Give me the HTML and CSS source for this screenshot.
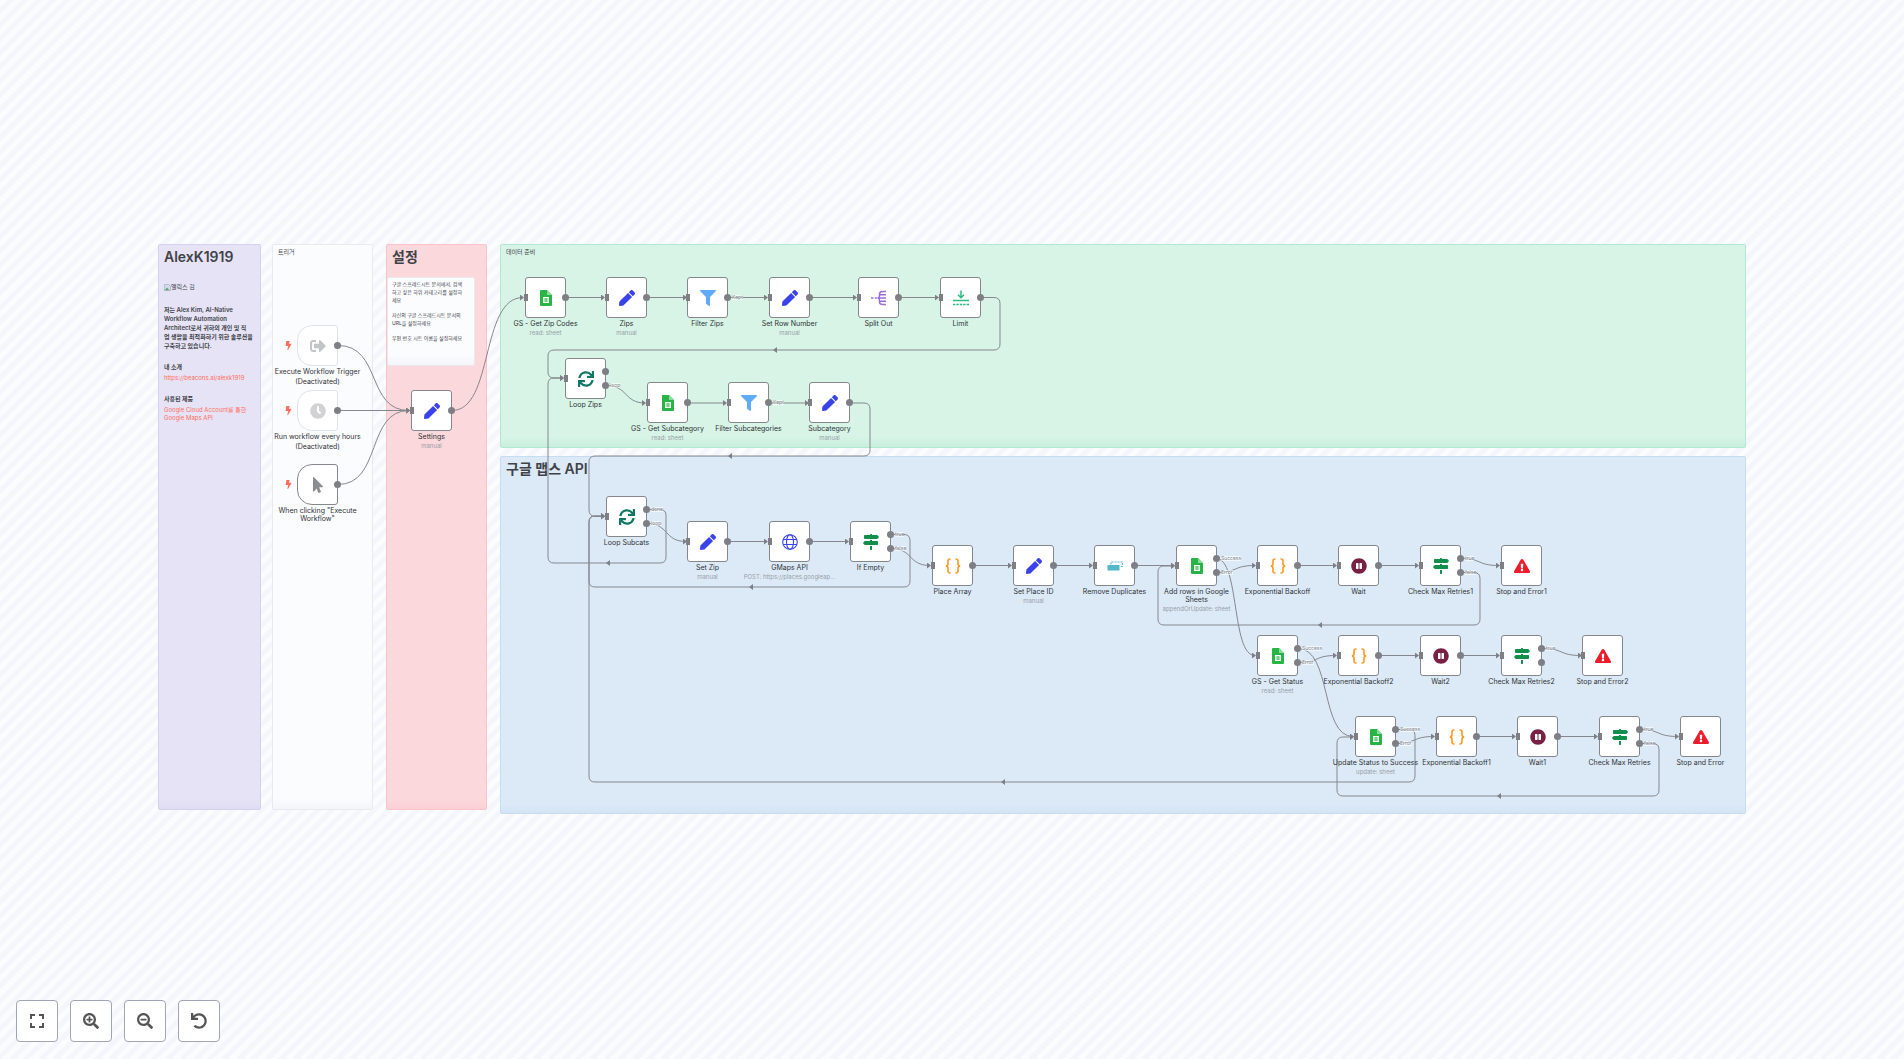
FILE: index.html
```html
<!DOCTYPE html>
<html lang="ko">
<head>
<meta charset="utf-8">
<title>AlexK1919 워크플로</title>
<link rel="stylesheet" href="styles.css">
</head>
<body>
<svg class="sprite" aria-hidden="true">
  <symbol id="pen" viewBox="0 0 512 512"><path fill="#3a42e9" d="M290.74 93.24l128.02 128.02-277.99 277.99-114.14 12.6C11.35 513.54-1.56 500.62.14 485.34l12.7-114.22 277.9-277.88zm207.2-19.06l-60.11-60.11c-18.75-18.75-49.16-18.75-67.91 0l-56.55 56.55 128.02 128.02 56.55-56.55c18.75-18.76 18.75-49.16 0-67.91z"/></symbol>
  <symbol id="filter" viewBox="0 0 512 512"><path fill="#5fabfa" d="M487.976 0H24.028C2.71 0-8.047 25.866 7.058 40.971L192 225.941V432c0 7.831 3.821 15.17 10.237 19.662l80 55.98C298.02 518.69 320 507.493 320 487.98V225.941l184.947-184.97C520.021 25.896 509.338 0 487.976 0z"/></symbol>
  <symbol id="clock" viewBox="0 0 512 512"><path fill="#d2d2d4" d="M256,8C119,8,8,119,8,256S119,504,256,504,504,393,504,256,393,8,256,8Zm92.49,313h0l-20,25a16,16,0,0,1-22.49,2.5h0l-67-49.72a40,40,0,0,1-15-31.23V112a16,16,0,0,1,16-16h32a16,16,0,0,1,16,16V256l58,42.5A16,16,0,0,1,348.49,321Z"/></symbol>
  <symbol id="exit" viewBox="0 0 512 512"><path fill="#c3c4c7" d="M497 273L329 441c-15 15-41 4.500-41-17v-96H152c-13.300 0-24-10.700-24-24v-96c0-13.300 10.700-24 24-24h136V88c0-21.400 25.900-32 41-17l168 168c9.300 9.400 9.300 24.600 0 34zM192 436v-40c0-6.600-5.400-12-12-12H96c-17.700 0-32-14.300-32-32V160c0-17.700 14.300-32 32-32h84c6.600 0 12-5.400 12-12V76c0-6.600-5.400-12-12-12H96c-53 0-96 43-96 96v192c0 53 43 96 96 96h84c6.600 0 12-5.400 12-12z"/></symbol>
  <symbol id="pointer" viewBox="0 0 320 512"><path fill="#8b8c91" d="M302.189 329.126H196.105l55.831 135.993c3.889 9.428-.555 19.999-9.444 23.999l-49.165 21.427c-9.165 4-19.443-.571-23.332-9.714l-53.053-129.136-86.664 89.138C18.729 472.71 0 463.554 0 447.977V18.299C0 1.899 19.921-6.096 30.277 5.443l284.412 292.542c11.472 11.179 3.007 31.141-12.5 31.141z"/></symbol>
  <symbol id="sync" viewBox="0 0 512 512"><path fill="#117864" d="M440.65 12.57l4 82.77A247.16 247.16 0 0 0 255.83 8C134.73 8 33.91 94.92 12.29 209.82A12 12 0 0 0 24.09 224h49.05a12 12 0 0 0 11.67-9.26 175.91 175.91 0 0 1 317-56.94l-101.46-4.86a12 12 0 0 0-12.57 12v47.41a12 12 0 0 0 12 12H500a12 12 0 0 0 12-12V12a12 12 0 0 0-12-12h-47.37a12 12 0 0 0-11.98 12.57zM255.83 432a175.61 175.61 0 0 1-146-77.8l101.8 4.87a12 12 0 0 0 12.57-12v-47.4a12 12 0 0 0-12-12H12a12 12 0 0 0-12 12V500a12 12 0 0 0 12 12h47.35a12 12 0 0 0 12-12.6l-4.15-82.57A247.17 247.17 0 0 0 255.83 504c121.11 0 221.93-86.92 243.55-201.82a12 12 0 0 0-11.8-14.18h-49.05a12 12 0 0 0-11.67 9.26A175.86 175.86 0 0 1 255.83 432z"/></symbol>
  <symbol id="warn" viewBox="0 0 576 512"><path fill="#ec1c2b" d="M569.517 440.013C587.975 472.007 564.806 512 527.94 512H48.054c-36.937 0-59.999-40.055-41.577-71.987L246.423 23.985c18.467-32.009 64.72-31.951 83.154 0l239.94 416.028zM288 354c-25.405 0-46 20.595-46 46s20.595 46 46 46 46-20.595 46-46-20.595-46-46-46zm-43.673-165.346l7.418 136c.347 6.364 5.609 11.346 11.982 11.346h48.546c6.373 0 11.635-4.982 11.982-11.346l7.418-136c.375-6.874-5.098-12.654-11.982-12.654h-63.383c-6.884 0-12.356 5.78-11.981 12.654z"/></symbol>
  <symbol id="pause" viewBox="0 0 512 512"><path fill="#772244" d="M256 8C119 8 8 119 8 256s111 248 248 248 248-111 248-248S393 8 256 8zm-16 328c0 8.800-7.200 16-16 16h-48c-8.800 0-16-7.200-16-16V176c0-8.800 7.200-16 16-16h48c8.800 0 16 7.200 16 16v160zm112 0c0 8.800-7.200 16-16 16h-48c-8.800 0-16-7.200-16-16V176c0-8.800 7.200-16 16-16h48c8.800 0 16 7.200 16 16v160z"/></symbol>
  <symbol id="signs" viewBox="0 0 512 512"><path fill="#118f4b" d="M507.31 84.69L464 41.37c-6-6-14.14-9.37-22.63-9.37H288V16c0-8.84-7.16-16-16-16h-32c-8.840 0-16 7.160-16 16v16H56c-13.250 0-24 10.750-24 24v80c0 13.250 10.750 24 24 24h385.370c8.490 0 16.620-3.370 22.630-9.370l43.310-43.310c6.250-6.260 6.250-16.380 0-22.630zM224 496c0 8.840 7.160 16 16 16h32c8.840 0 16-7.160 16-16V384h-64v112zm232-272H288v-32h-64v32H70.630c-8.490 0-16.620 3.370-22.630 9.370L4.690 276.690c-6.250 6.250-6.250 16.380 0 22.630L48 342.630c6 6 14.140 9.370 22.630 9.370H456c13.250 0 24-10.750 24-24v-80c0-13.250-10.750-24-24-24z"/></symbol>
  <symbol id="bolt" viewBox="0 0 320 512"><path fill="#ff6d5a" d="M296 160H180.6l42.6-129.8C227.2 15 215.7 0 200 0H56C44 0 33.8 8.9 32.2 20.8l-32 240C-1.7 275.2 9.5 288 24 288h118.7L96.6 482.5c-3.6 15.2 8 29.5 23.3 29.5 8.4 0 16.4-4.4 20.8-12l176-304c9.3-15.9-2.2-36-20.700-36z"/></symbol>
  <symbol id="sheets" viewBox="0 0 16 16"><path fill="#29b446" d="M3 0h6l5 5v10a1 1 0 0 1-1 1H3a1 1 0 0 1-1-1V1a1 1 0 0 1 1-1z"/><path fill="#8ed99c" d="M9 0l5 5H9z"/><path fill="#fff" d="M5 7h6v6H5z"/><path stroke="#29b446" stroke-width=".8" d="M5.700 9h4.600M5.700 11h4.600M8 8v4.300"/></symbol>
  <symbol id="globe" viewBox="0 0 16 16"><g fill="none" stroke="#3a42e9" stroke-width="1.100"><circle cx="8" cy="8" r="7.300"/><ellipse cx="8" cy="8" rx="3.500" ry="7.300"/><path d="M1.300 5.500h13.400M1.300 10.500h13.400"/></g></symbol>
  <symbol id="braces" viewBox="0 0 16 16"><g fill="none" stroke="#ff9922" stroke-width="1.600"><path d="M5.500 1H5Q3 1 3 3v2.500Q3 8 .800 8 3 8 3 10.500V13q0 2 2 2h.500"/><path d="M10.500 1h.500q2 0 2 2v2.500Q13 8 15.200 8 13 8 13 10.500V13q0 2-2 2h-.500"/></g></symbol>
  <symbol id="dedupe" viewBox="0 0 16 16"><path fill="#54b8c9" d="M1 7h11.500v5.500h-12V7.500z"/><path fill="none" stroke="#54b8c9" stroke-width="1.100" stroke-dasharray="2 1" d="M4 6.500v-2.500h11.400v4.500h-2.400"/></symbol>
  <symbol id="split" viewBox="0 0 16 16"><g fill="none" stroke="#9b6dd7" stroke-width="1.400"><path d="M0 8h2.500M3.800 8h2"/><path d="M15 1.500h-3Q8.500 1.500 8.500 4v1.500Q8.500 8 6.500 8q2 0 2 2.500V12q0 2.500 3.500 2.500h3M9 4.800h6M8.300 8H15M9 11.200h6"/></g></symbol>
  <symbol id="limit" viewBox="0 0 16 16"><g fill="none" stroke="#2dbb7f" stroke-width="1.500"><path d="M8 .500v7M5 4.800l3 3 3-3M0 10.500h16"/><path stroke-dasharray="2.400 1" d="M0 14.500h16"/></g></symbol>
  <symbol id="expand" viewBox="0 0 14 14"><path fill="none" stroke="#555" stroke-width="2" d="M1 5V1h4M9 1h4v4M13 9v4H9M5 13H1V9"/></symbol>
  <symbol id="zoom-in" viewBox="0 0 512 512"><path fill="#555" d="M304 192v32c0 6.600-5.400 12-12 12h-56v56c0 6.600-5.400 12-12 12h-32c-6.600 0-12-5.400-12-12v-56h-56c-6.600 0-12-5.400-12-12v-32c0-6.600 5.400-12 12-12h56v-56c0-6.600 5.400-12 12-12h32c6.600 0 12 5.400 12 12v56h56c6.600 0 12 5.400 12 12zm201 284.700L476.700 505c-9.400 9.400-24.600 9.400-33.900 0L343 405.300c-4.500-4.500-7-10.600-7-17V372c-35.300 27.600-79.700 44-128 44C93.100 416 0 322.900 0 208S93.100 0 208 0s208 93.100 208 208c0 48.300-16.400 92.700-44 128h16.300c6.400 0 12.500 2.500 17 7l99.700 99.700c9.300 9.400 9.300 24.600 0 34zM344 208c0-75.200-60.800-136-136-136S72 132.800 72 208s60.800 136 136 136 136-60.800 136-136z"/></symbol>
  <symbol id="zoom-out" viewBox="0 0 512 512"><path fill="#555" d="M304 192v32c0 6.600-5.400 12-12 12H124c-6.600 0-12-5.400-12-12v-32c0-6.600 5.400-12 12-12h168c6.600 0 12 5.400 12 12zm201 284.700L476.700 505c-9.400 9.400-24.600 9.400-33.900 0L343 405.300c-4.500-4.500-7-10.600-7-17V372c-35.300 27.600-79.700 44-128 44C93.100 416 0 322.900 0 208S93.100 0 208 0s208 93.100 208 208c0 48.300-16.400 92.700-44 128h16.300c6.400 0 12.500 2.500 17 7l99.700 99.700c9.300 9.400 9.300 24.600 0 34zM344 208c0-75.200-60.800-136-136-136S72 132.800 72 208s60.800 136 136 136 136-60.800 136-136z"/></symbol>
  <symbol id="undo" viewBox="0 0 512 512"><path fill="#555" d="M212.333 224.333H12c-6.627 0-12-5.373-12-12V12C0 5.373 5.373 0 12 0h48c6.627 0 12 5.373 12 12v78.112C117.773 39.279 184.26 7.47 258.175 8.007c136.906.994 246.448 111.623 246.157 248.532C504.041 393.258 393.12 504 256.333 504c-64.089 0-122.496-24.313-166.51-64.215-5.099-4.622-5.334-12.554-.467-17.42l33.967-33.967c4.474-4.474 11.662-4.717 16.401-.525C170.76 415.336 211.58 432 256.333 432c97.268 0 176-78.716 176-176 0-97.267-78.716-176-176-176-58.496 0-110.28 28.476-142.274 72.333h98.274c6.627 0 12 5.373 12 12v48c0 6.627-5.373 12-12 12z"/></symbol>
</svg>

<main class="canvas">
  <section class="sticky purple" style="left:158px;top:244px;width:103px;height:566px">
    <h1>AlexK1919</h1>
    <p class="photo"><svg viewBox="0 0 8 8" aria-hidden="true"><path fill="#cfdcef" stroke="#9aa3b3" stroke-width=".7" d="M.5.500h5l2 2v5h-7z"/><path fill="#58a55c" d="M1 7l2.500-3L6 7z"/></svg>앨릭스 김</p>
    <h2>저는 Alex Kim, AI-Native<br>Workflow Automation<br>Architect로서 귀하의 개인 및 직<br>업 생활을 최적화하기 위한 솔루션을<br>구축하고 있습니다.</h2>
    <h3>내 소개</h3>
    <p><a href="https://beacons.ai/alexk1919">https://beacons.ai/alexk1919</a></p>
    <h3>사용된 제품</h3>
    <p><a href="#maps">Google Cloud Account를 통한<br>Google Maps API</a></p>
  </section>
  <section class="sticky white" style="left:272px;top:244px;width:101px;height:566px"><p>트리거</p></section>
  <section class="sticky red" style="left:386px;top:244px;width:101px;height:566px"><h1>설정</h1></section>
  <section class="sticky white note" style="left:387px;top:277px;width:88px;height:89px">
    <p>구글 스프레드시트 문서에서, 검색<br>하고 싶은 하위 카테고리를 설정하<br>세요</p>
    <p>자신의 구글 스프레드시트 문서의<br>URL을 설정하세요</p>
    <p>우편 번호 시트 이름을 설정하세요</p>
  </section>
  <section class="sticky green" style="left:500px;top:244px;width:1246px;height:204px"><p>데이터 준비</p></section>
  <section class="sticky blue" style="left:500px;top:456px;width:1246px;height:358px"><h1>구글 맵스 API</h1></section>

  <svg class="wires" aria-hidden="true">
    <defs><marker id="tip" viewBox="0 0 4 6" refX="3" refY="3" markerWidth="4" markerHeight="6" markerUnits="userSpaceOnUse" orient="auto"><path d="M0 0L4 3 0 6z"/></marker></defs>
    <g class="flow">
      <path d="M338 345.500C382 345.500 366 410.500 409 410.500"/>
      <path d="M338 410.500H409"/>
      <path d="M338 484.500C382 484.500 366 410.500 409 410.500"/>
      <path d="M452 410.500C494 410.500 480 297.500 523 297.500"/>
      <path d="M566 297.500H604"/><path d="M647 297.500H686"/><path d="M729 297.500H767"/><path d="M810 297.500H856"/><path d="M899 297.500H938"/>
      <path d="M981 297.500H994q6 0 6 6V344q0 6-6 6H554q-6 0-6 6V372q0 6 6 6H563"/>
      <path d="M606 385.500C628 385.500 624 403 645 403"/>
      <path d="M688 403H726"/><path d="M769 403H808"/>
      <path d="M850 403H864q6 0 6 6V450q0 6-6 6H595q-6 0-6 6V510q0 6 6 6.500H604"/>
      <path d="M647 509.500H660q6 0 6 6V557q0 6-6 6H554q-6 0-6-6V384q0-6 6-6H563"/>
      <path d="M647 523.500C669 523.500 664 541.500 686 541.500"/>
      <path d="M729 541.500H767"/><path d="M810 541.500H848"/>
      <path d="M891 534.500H904q6 0 6 6V581q0 6-6 6H595q-6 0-6-6V522q0-6 6-6H604"/>
      <path d="M891 548.500C913 548.500 908 565.500 930 565.500"/>
      <path d="M973 565.500H1011"/><path d="M1054 565.500H1092"/><path d="M1135 565.500H1174"/>
      <path d="M1216 558.500C1240 558.500 1231 655.500 1255 655.500"/>
      <path d="M1216 572.500C1238 572.500 1233 565.500 1255 565.500"/>
      <path d="M1298 565.500H1336"/><path d="M1379 565.500H1418"/>
      <path d="M1461 558.500C1482 558.500 1477 565.500 1499 565.500"/>
      <path d="M1461 572.500H1474q6 0 6 6V619q0 6-6 6H1164q-6 0-6-6V572q0-6 6-6H1174"/>
      <path d="M1298 648.500C1332 648.500 1320 736.500 1353 736.500"/>
      <path d="M1298 662.500C1320 662.500 1314 655.500 1336 655.500"/>
      <path d="M1379 655.500H1418"/><path d="M1461 655.500H1499"/>
      <path d="M1542 648.500C1564 648.500 1559 655.500 1581 655.500"/>
      <path d="M1395 729.500H1409q6 0 6 6V776q0 6-6 6H595q-6 0-6-6V522q0-6 6-6H604"/>
      <path d="M1395 743.500C1417 743.500 1412 736.500 1434 736.500"/>
      <path d="M1476 736.500H1515"/><path d="M1558 736.500H1597"/>
      <path d="M1639 729.500C1661 729.500 1656 736.500 1678 736.500"/>
      <path d="M1639 743.500H1653q6 0 6 6V790q0 6-6 6H1343q-6 0-6-6V743q0-6 6-6H1353"/>
    </g>
    <path class="mid" d="M773 350l4-3v6zM728 456l4-3v6zM606 563l4-3v6zM749 587l4-3v6zM1001 782l4-3v6zM1318 625l4-3v6zM1497 796l4-3v6z"/>
  </svg>

  <article class="node start off" style="left:297px;top:325px"><div class="box"><svg class="bolt"><use href="#bolt"/></svg><svg class="icon"><use href="#exit"/></svg><i class="out"></i></div><h4>Execute Workflow Trigger</h4><h4 class="state">(Deactivated)</h4></article>
  <article class="node start off" style="left:297px;top:390px"><div class="box"><svg class="bolt"><use href="#bolt"/></svg><svg class="icon"><use href="#clock"/></svg><i class="out"></i></div><h4>Run workflow every hours</h4><h4 class="state">(Deactivated)</h4></article>
  <article class="node start" style="left:297px;top:464px"><div class="box"><svg class="bolt"><use href="#bolt"/></svg><svg class="icon"><use href="#pointer"/></svg><i class="out"></i></div><h4>When clicking "Execute<br>Workflow"</h4></article>
  <article class="node" style="left:411px;top:390px"><div class="box"><i class="in"></i><svg class="icon"><use href="#pen"/></svg><i class="out"></i></div><h4>Settings</h4><p>manual</p></article>

  <article class="node" style="left:525px;top:277px"><div class="box"><i class="in"></i><svg class="icon"><use href="#sheets"/></svg><i class="out"></i></div><h4>GS - Get Zip Codes</h4><p>read: sheet</p></article>
  <article class="node" style="left:606px;top:277px"><div class="box"><i class="in"></i><svg class="icon"><use href="#pen"/></svg><i class="out"></i></div><h4>Zips</h4><p>manual</p></article>
  <article class="node" style="left:687px;top:277px"><div class="box"><i class="in"></i><svg class="icon"><use href="#filter"/></svg><i class="out"></i><span class="tag">Kept</span></div><h4>Filter Zips</h4></article>
  <article class="node" style="left:769px;top:277px"><div class="box"><i class="in"></i><svg class="icon"><use href="#pen"/></svg><i class="out"></i></div><h4>Set Row Number</h4><p>manual</p></article>
  <article class="node" style="left:858px;top:277px"><div class="box"><i class="in"></i><svg class="icon"><use href="#split"/></svg><i class="out"></i></div><h4>Split Out</h4></article>
  <article class="node" style="left:940px;top:277px"><div class="box"><i class="in"></i><svg class="icon"><use href="#limit"/></svg><i class="out"></i></div><h4>Limit</h4></article>

  <article class="node" style="left:565px;top:358px"><div class="box"><i class="in"></i><svg class="icon"><use href="#sync"/></svg><i class="out up"></i><i class="out down"></i><span class="tag down">loop</span></div><h4>Loop Zips</h4></article>
  <article class="node" style="left:647px;top:382px"><div class="box"><i class="in"></i><svg class="icon"><use href="#sheets"/></svg><i class="out"></i></div><h4>GS - Get Subcategory</h4><p>read: sheet</p></article>
  <article class="node" style="left:728px;top:382px"><div class="box"><i class="in"></i><svg class="icon"><use href="#filter"/></svg><i class="out"></i><span class="tag">Kept</span></div><h4>Filter Subcategories</h4></article>
  <article class="node" style="left:809px;top:382px"><div class="box"><i class="in"></i><svg class="icon"><use href="#pen"/></svg><i class="out"></i></div><h4>Subcategory</h4><p>manual</p></article>

  <article class="node" style="left:606px;top:496px"><div class="box"><i class="in"></i><svg class="icon"><use href="#sync"/></svg><i class="out up"></i><i class="out down"></i><span class="tag up">done</span><span class="tag down">loop</span></div><h4>Loop Subcats</h4></article>
  <article class="node" style="left:687px;top:521px"><div class="box"><i class="in"></i><svg class="icon"><use href="#pen"/></svg><i class="out"></i></div><h4>Set Zip</h4><p>manual</p></article>
  <article class="node" style="left:769px;top:521px"><div class="box"><i class="in"></i><svg class="icon"><use href="#globe"/></svg><i class="out"></i></div><h4>GMaps API</h4><p>POST: https://places.googleap...</p></article>
  <article class="node" style="left:850px;top:521px"><div class="box"><i class="in"></i><svg class="icon"><use href="#signs"/></svg><i class="out up"></i><i class="out down"></i><span class="tag up">true</span><span class="tag down">false</span></div><h4>If Empty</h4></article>

  <article class="node" style="left:932px;top:545px"><div class="box"><i class="in"></i><svg class="icon"><use href="#braces"/></svg><i class="out"></i></div><h4>Place Array</h4></article>
  <article class="node" style="left:1013px;top:545px"><div class="box"><i class="in"></i><svg class="icon"><use href="#pen"/></svg><i class="out"></i></div><h4>Set Place ID</h4><p>manual</p></article>
  <article class="node" style="left:1094px;top:545px"><div class="box"><i class="in"></i><svg class="icon"><use href="#dedupe"/></svg><i class="out"></i></div><h4>Remove Duplicates</h4></article>
  <article class="node" style="left:1176px;top:545px"><div class="box"><i class="in"></i><svg class="icon"><use href="#sheets"/></svg><i class="out up"></i><i class="out down"></i><span class="tag up">Success</span><span class="tag down">Error</span></div><h4>Add rows in Google<br>Sheets</h4><p>appendOrUpdate: sheet</p></article>
  <article class="node" style="left:1257px;top:545px"><div class="box"><i class="in"></i><svg class="icon"><use href="#braces"/></svg><i class="out"></i></div><h4>Exponential Backoff</h4></article>
  <article class="node" style="left:1338px;top:545px"><div class="box"><i class="in"></i><svg class="icon"><use href="#pause"/></svg><i class="out"></i></div><h4>Wait</h4></article>
  <article class="node" style="left:1420px;top:545px"><div class="box"><i class="in"></i><svg class="icon"><use href="#signs"/></svg><i class="out up"></i><i class="out down"></i><span class="tag up">true</span><span class="tag down">false</span></div><h4>Check Max Retries1</h4></article>
  <article class="node" style="left:1501px;top:545px"><div class="box"><i class="in"></i><svg class="icon"><use href="#warn"/></svg></div><h4>Stop and Error1</h4></article>

  <article class="node" style="left:1257px;top:635px"><div class="box"><i class="in"></i><svg class="icon"><use href="#sheets"/></svg><i class="out up"></i><i class="out down"></i><span class="tag up">Success</span><span class="tag down">Error</span></div><h4>GS - Get Status</h4><p>read: sheet</p></article>
  <article class="node" style="left:1338px;top:635px"><div class="box"><i class="in"></i><svg class="icon"><use href="#braces"/></svg><i class="out"></i></div><h4>Exponential Backoff2</h4></article>
  <article class="node" style="left:1420px;top:635px"><div class="box"><i class="in"></i><svg class="icon"><use href="#pause"/></svg><i class="out"></i></div><h4>Wait2</h4></article>
  <article class="node" style="left:1501px;top:635px"><div class="box"><i class="in"></i><svg class="icon"><use href="#signs"/></svg><i class="out up"></i><i class="out down"></i><span class="tag up">true</span></div><h4>Check Max Retries2</h4></article>
  <article class="node" style="left:1582px;top:635px"><div class="box"><i class="in"></i><svg class="icon"><use href="#warn"/></svg></div><h4>Stop and Error2</h4></article>

  <article class="node" style="left:1355px;top:716px"><div class="box"><i class="in"></i><svg class="icon"><use href="#sheets"/></svg><i class="out up"></i><i class="out down"></i><span class="tag up">Success</span><span class="tag down">Error</span></div><h4>Update Status to Success</h4><p>update: sheet</p></article>
  <article class="node" style="left:1436px;top:716px"><div class="box"><i class="in"></i><svg class="icon"><use href="#braces"/></svg><i class="out"></i></div><h4>Exponential Backoff1</h4></article>
  <article class="node" style="left:1517px;top:716px"><div class="box"><i class="in"></i><svg class="icon"><use href="#pause"/></svg><i class="out"></i></div><h4>Wait1</h4></article>
  <article class="node" style="left:1599px;top:716px"><div class="box"><i class="in"></i><svg class="icon"><use href="#signs"/></svg><i class="out up"></i><i class="out down"></i><span class="tag up">true</span><span class="tag down">false</span></div><h4>Check Max Retries</h4></article>
  <article class="node" style="left:1680px;top:716px"><div class="box"><i class="in"></i><svg class="icon"><use href="#warn"/></svg></div><h4>Stop and Error</h4></article>

  <nav class="controls">
    <button type="button" aria-label="Fit view"><svg class="fit"><use href="#expand"/></svg></button>
    <button type="button" aria-label="Zoom in"><svg><use href="#zoom-in"/></svg></button>
    <button type="button" aria-label="Zoom out"><svg><use href="#zoom-out"/></svg></button>
    <button type="button" aria-label="Reset zoom"><svg><use href="#undo"/></svg></button>
  </nav>
</main>
</body>
</html>
```
FILE: styles.css
```css
* { box-sizing: border-box; }

body {
  margin: 0;
  font-family: Inter, "Noto Sans CJK KR", sans-serif;
  color: #404247;
}

h1, h2, h3, h4, p { margin: 0; }
a { color: #ff6d5a; text-decoration: none; }
.sprite { display: none; }

.canvas {
  position: relative;
  min-height: 100vh;
  overflow: hidden;
  background: repeating-linear-gradient(135deg, #fbfcfe 0 5px, #f4f6fb 5px 10px);
}

/* sticky notes */
.sticky {
  position: absolute;
  padding: 3px 5px;
  border: 1px solid;
  border-radius: 2px;
  font-size: 6px;
  line-height: 8px;
  white-space: nowrap;
}
.sticky::after {
  content: "";
  position: absolute;
  inset: auto 0 0;
  height: 10px;
  background: linear-gradient(transparent, var(--edge));
  opacity: .4;
}
.purple { --edge: #d5d0ef; background: #e6e3f6; border-color: var(--edge); }
.white { --edge: #e8eaf0; background: #fbfcfe; border-color: var(--edge); }
.red { --edge: #fbc2c7; background: #fbd8dc; border-color: var(--edge); }
.green { --edge: #b1e9cf; background: #d7f4e6; border-color: var(--edge); }
.blue { --edge: #c6dcf1; background: #dceaf8; border-color: var(--edge); }

.sticky h1 { font-size: 14px; line-height: 18px; font-weight: 600; }
.sticky h2 { margin-top: 14px; font-size: 6px; line-height: 9px; font-weight: 600; }
.sticky h3 { margin-top: 13px; font-size: 6px; line-height: 8px; font-weight: 600; }
.sticky h3 + p { margin-top: 3px; }
.photo { display: flex; align-items: center; margin-top: 17px; }
.photo svg { width: 7px; height: 7px; }
.note { padding: 2px 4px; font-size: 5px; }
.note p + p { margin-top: 7px; }

/* connections */
.wires { position: absolute; inset: 0; width: 100%; height: 100%; }
.flow path { fill: none; stroke: #85878d; stroke-width: 1; marker-end: url(#tip); }
.wires marker path, .mid { fill: #7d7f85; stroke: none; marker-end: none; }

/* nodes */
.node {
  position: absolute;
  width: 41px;
  display: flex;
  flex-direction: column;
  align-items: center;
  white-space: nowrap;
  text-align: center;
}
.box {
  position: relative;
  width: 41px;
  height: 41px;
  margin-bottom: 2px;
  display: grid;
  place-items: center;
  background: #fff;
  border: 1px solid #85878d;
  border-radius: 3px;
}
.start .box { border-radius: 15px 3px 3px 15px; }
.off .box { border-color: #dfe2ea; }
.icon { width: 16px; height: 16px; }
.bolt { position: absolute; left: -13px; top: 15px; width: 7px; height: 9px; }
.node h4 { font-size: 7px; line-height: 8px; font-weight: 400; color: #303236; }
.node .state { margin-top: 2px; }
.node p { margin-top: 1px; font-size: 6px; line-height: 8px; color: #98a0a6; }

.in, .out { position: absolute; background: #7d7f85; }
.in { left: -2px; top: 16px; width: 4px; height: 7px; }
.out { right: -4px; top: 16px; width: 7px; height: 7px; border-radius: 50%; }
.out.up { top: 9px; }
.out.down { top: 23px; }
.tag {
  position: absolute;
  left: 44px;
  top: 17px;
  font-size: 5px;
  line-height: 5px;
  color: #85888e;
  background: rgba(255, 255, 255, .6);
}
.tag.up { top: 10px; }
.tag.down { top: 24px; }

/* view controls */
.controls {
  position: absolute;
  left: 16px;
  bottom: 17px;
  display: flex;
  gap: 12px;
}
.controls button {
  width: 42px;
  height: 42px;
  padding: 0;
  display: grid;
  place-items: center;
  background: #fff;
  border: 1px solid #a1a5b5;
  border-radius: 4px;
}
.controls svg { width: 16px; height: 16px; }
.controls .fit { width: 14px; height: 14px; }
```
